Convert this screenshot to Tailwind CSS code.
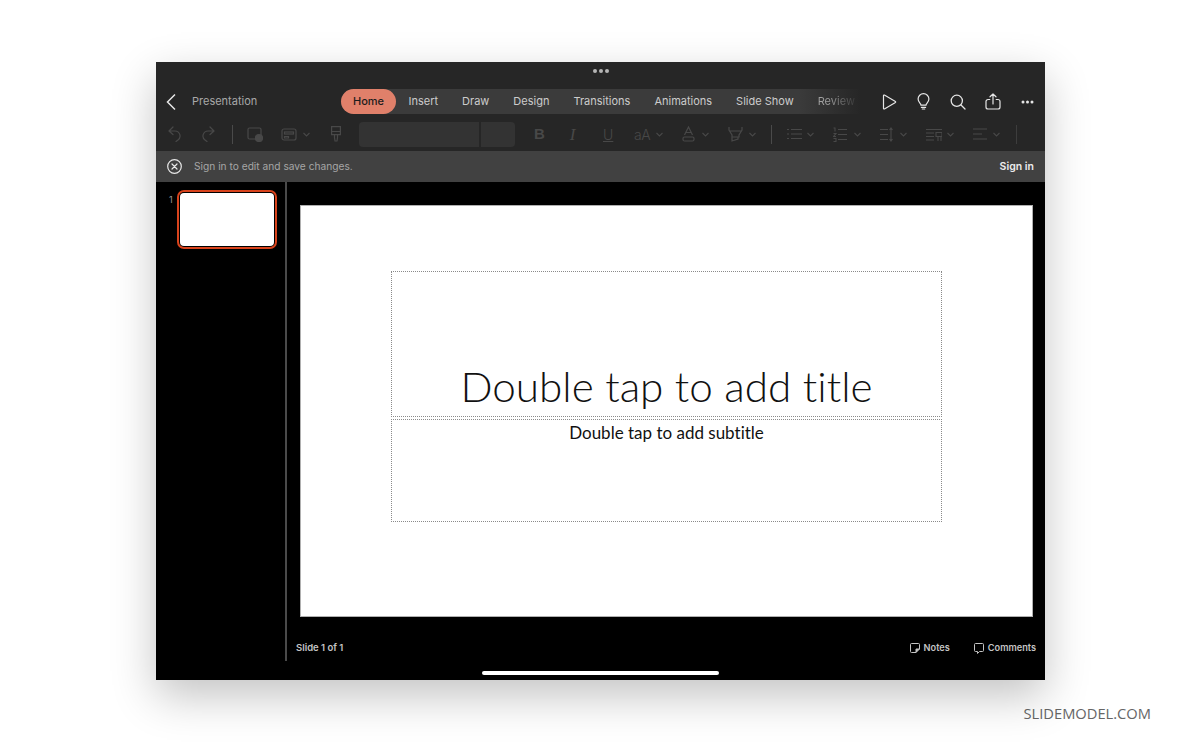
<!DOCTYPE html>
<html lang="en">
<head>
  <meta charset="UTF-8">
  <title>Presentation</title>
  <script src="https://cdn.jsdelivr.net/npm/@tailwindcss/browser@4"></script>
</head>
<body class="bg-white h-[743px] overflow-hidden font-['Inter',sans-serif]">
  <div class="pt-[62px] pl-[156px]">
    <div class="relative w-[889px] h-[618px] flex flex-col bg-black shadow-[0_16px_42px_rgba(0,0,0,0.24)]">

      <!-- top bar -->
      <div class="h-[52px] bg-[#262626] relative">
        <div class="flex justify-center gap-[2px] pt-[7px]">
          <span class="w-[4px] h-[4px] rounded-full bg-[#b5b5b5]"></span>
          <span class="w-[4px] h-[4px] rounded-full bg-[#b5b5b5]"></span>
          <span class="w-[4px] h-[4px] rounded-full bg-[#b5b5b5]"></span>
        </div>
        <div class="flex items-center mt-[16px] h-[25px]">
          <svg class="ml-[9px] w-[12px] h-[18px] text-[#e6e6e6]" viewBox="0 0 12 18" fill="none" stroke="currentColor" stroke-width="1.5"><path d="M10 1.5 2.5 9l7.5 7.5"/></svg>
          <span class="ml-[15px] w-[149px] text-[11px] text-[#a8a8a8]">Presentation</span>
          <div class="w-[520px] h-[25px] flex items-center rounded-l-full bg-gradient-to-r from-[#3b3b3b] from-88% to-[#262626] text-[11px] text-[#cccccc]">
            <span class="w-[55px] h-[25px] flex items-center justify-center rounded-full bg-[#e0806a] text-[#1c1c1c] font-medium">Home</span>
            <div class="flex items-center gap-[24px] ml-[12.5px]">
              <span>Insert</span>
              <span>Draw</span>
              <span>Design</span>
              <span>Transitions</span>
              <span>Animations</span>
              <span>Slide Show</span>
              <span class="text-transparent bg-clip-text bg-gradient-to-r from-[#a0a0a0] from-30% to-[#3a3a3a]">Review</span>
            </div>
          </div>
          <div class="flex items-center text-[#e6e6e6] ml-[21px] gap-[19px]">
            <svg class="w-[15px] h-[16px]" viewBox="0 0 15 16" fill="none" stroke="currentColor" stroke-width="1.2" stroke-linejoin="round"><path d="M1.5 1.6v12.8a.6.6 0 0 0 .9.5l11-6.4a.6.6 0 0 0 0-1L2.4 1.1a.6.6 0 0 0-.9.5z"/></svg>
            <svg class="w-[15px] h-[17px]" viewBox="0 0 15 17" fill="none" stroke="currentColor" stroke-width="1.2" stroke-linecap="round"><path d="M5 12.2c0-1.6-2.9-3-2.900-6.100a5.400 5.400 0 0 1 10.800 0c0 3.100-2.900 4.500-2.900 6.100z"/><path d="M5.400 14.400h4.200M6.300 16h2.400"/></svg>
            <svg class="w-[16px] h-[16px]" viewBox="0 0 16 16" fill="none" stroke="currentColor" stroke-width="1.3" stroke-linecap="round"><circle cx="6.800" cy="6.800" r="5.600"/><path d="m11 11 4 4"/></svg>
            <svg class="w-[16px] h-[17px]" viewBox="0 0 16 17" fill="none" stroke="currentColor" stroke-width="1.2" stroke-linecap="round" stroke-linejoin="round"><path d="M8 11V1.200M5 3.800 8 1l3 2.800"/><path d="M4.800 6.500H3a2 2 0 0 0-2 2V14a2 2 0 0 0 2 2h10a2 2 0 0 0 2-2V8.500a2 2 0 0 0-2-2h-1.800"/></svg>
            <svg class="ml-[1px] w-[13px] h-[4px]" viewBox="0 0 13 4" fill="currentColor"><circle cx="2" cy="2" r="1.500"/><circle cx="6.500" cy="2" r="1.500"/><circle cx="11" cy="2" r="1.500"/></svg>
          </div>
        </div>
      </div>

      <!-- toolbar, everything disabled -->
      <div class="h-[37px] pt-[3px] bg-[#262626] flex items-center text-[#484848] text-[15px]">
        <div class="w-[889px] flex items-center pl-[12px]">
          <svg class="w-[13px] h-[16px]" viewBox="0 0 13 16" fill="none" stroke="currentColor" stroke-width="1.200" stroke-linecap="round" stroke-linejoin="round"><path d="M5 1 1 5l4 3.500M1.500 5H7a5 5 0 0 1 3 9l-2 1.500"/></svg>
          <svg class="ml-[21px] w-[13px] h-[16px]" viewBox="0 0 13 16" fill="none" stroke="currentColor" stroke-width="1.200" stroke-linecap="round" stroke-linejoin="round"><path d="M8 1l4 4-4 3.500M11.500 5H6a5 5 0 0 0-3 9l2 1.500"/></svg>
          <span class="ml-[17px] w-[1px] h-[19px] bg-[#4a4a4a]"></span>
          <svg class="ml-[14px] w-[16px] h-[15px]" viewBox="0 0 16 15" fill="none" stroke="currentColor" stroke-width="1.200"><rect x="1" y="1" width="13" height="11" rx="1.500"/><circle cx="12" cy="11" r="3.500" fill="currentColor"/></svg>
          <svg class="ml-[18px] w-[16px] h-[13px]" viewBox="0 0 16 13" fill="none" stroke="currentColor" stroke-width="1.200"><rect x="1" y="1" width="14" height="11" rx="2"/><rect x="3.500" y="4" width="9" height="2"/><path d="M3.500 8.500h4v1.500h-4z"/></svg>
          <svg class="ml-[6px] w-[7px] h-[5px]" viewBox="0 0 7 5" fill="none" stroke="currentColor" stroke-width="1.100"><path d="m.5 1 3 3 3-3"/></svg>
          <svg class="ml-[21px] w-[10px] h-[16px]" viewBox="0 0 10 16" fill="none" stroke="currentColor" stroke-width="1.200"><path d="M.6.600h8.800v8H.6zM.6 5.500h8.800"/><path d="M3.500 8.600v3L4 15h2l.5-3.400v-3"/></svg>
          <div class="ml-[18px] flex gap-[2px]">
            <span class="w-[120px] h-[25px] rounded-l-[4px] bg-[#333333]"></span>
            <span class="w-[34px] h-[25px] rounded-r-[4px] bg-[#333333]"></span>
          </div>
          <span class="ml-[19px] w-[9px] font-bold font-['Liberation_Sans',sans-serif]">B</span>
          <span class="ml-[24px] w-[11px] text-center italic font-['Liberation_Serif',serif] text-[17px] leading-none">I</span>
          <span class="ml-[25px] w-[10px] text-center underline font-light text-[14px]">U</span>
          <span class="ml-[21px] w-[16px] font-light text-[14px] tracking-[-0.5px] whitespace-nowrap">aA</span>
          <svg class="ml-[6px] w-[7px] h-[5px]" viewBox="0 0 7 5" fill="none" stroke="currentColor" stroke-width="1.100"><path d="m.5 1 3 3 3-3"/></svg>
          <svg class="ml-[19px] w-[13px] h-[16px]" viewBox="0 0 13 16" fill="none" stroke="currentColor" stroke-width="1.200"><path d="M2.500 9 6.500 1l4 8M4 6.500h5"/><rect x="1" y="11" width="11" height="4" rx="1.500"/></svg>
          <svg class="ml-[7px] w-[7px] h-[5px]" viewBox="0 0 7 5" fill="none" stroke="currentColor" stroke-width="1.100"><path d="m.5 1 3 3 3-3"/></svg>
          <svg class="ml-[19px] w-[15px] h-[16px]" viewBox="0 0 15 16" fill="none" stroke="currentColor" stroke-width="1.200"><path d="M1 1v3l3 5v2h7V9l3-5V1M1 5h13M4 11v4l6-2v-2"/></svg>
          <svg class="ml-[6px] w-[7px] h-[5px]" viewBox="0 0 7 5" fill="none" stroke="currentColor" stroke-width="1.100"><path d="m.5 1 3 3 3-3"/></svg>
          <span class="ml-[15px] w-[1px] h-[19px] bg-[#4a4a4a]"></span>
          <svg class="ml-[15px] w-[15px] h-[12px]" viewBox="0 0 15 12" fill="none" stroke="currentColor" stroke-width="1.100"><path d="M0 1.500h2M4 1.500h11M0 6h2M4 6h11M0 10.500h2M4 10.500h11"/></svg>
          <svg class="ml-[5px] w-[7px] h-[5px]" viewBox="0 0 7 5" fill="none" stroke="currentColor" stroke-width="1.100"><path d="m.5 1 3 3 3-3"/></svg>
          <svg class="ml-[19px] w-[14px] h-[15px]" viewBox="0 0 14 15" fill="none" stroke="currentColor" stroke-width="1.100"><path d="M.5 1H2v3.500M.5 6.500H3L.5 9.500H3M.5 11.500H3v3H.5M5 2.500h9M5 7.500h9M5 12.500h9"/></svg>
          <svg class="ml-[7px] w-[7px] h-[5px]" viewBox="0 0 7 5" fill="none" stroke="currentColor" stroke-width="1.100"><path d="m.5 1 3 3 3-3"/></svg>
          <svg class="ml-[19px] w-[14px] h-[15px]" viewBox="0 0 14 15" fill="none" stroke="currentColor" stroke-width="1.100"><path d="M0 2.500h8M0 7.500h8M0 12.500h8M11 1v13M9.500 3 11 1l1.500 2M9.500 12l1.500 2 1.500-2"/></svg>
          <svg class="ml-[6px] w-[7px] h-[5px]" viewBox="0 0 7 5" fill="none" stroke="currentColor" stroke-width="1.100"><path d="m.5 1 3 3 3-3"/></svg>
          <svg class="ml-[19px] w-[16px] h-[13px]" viewBox="0 0 16 13" fill="none" stroke="currentColor" stroke-width="1.100"><path d="M0 1.500h16M0 5h8M0 8.500h8M0 12h8M10 4.500h6v4h-6zM12 8.500V13M15 8.500V13"/></svg>
          <svg class="ml-[5px] w-[7px] h-[5px]" viewBox="0 0 7 5" fill="none" stroke="currentColor" stroke-width="1.100"><path d="m.5 1 3 3 3-3"/></svg>
          <svg class="ml-[19px] w-[14px] h-[12px]" viewBox="0 0 14 12" fill="none" stroke="currentColor" stroke-width="1.100"><path d="M0 1h14M0 6h9M0 11h14"/></svg>
          <svg class="ml-[6px] w-[7px] h-[5px]" viewBox="0 0 7 5" fill="none" stroke="currentColor" stroke-width="1.100"><path d="m.5 1 3 3 3-3"/></svg>
          <span class="ml-[16px] w-[1px] h-[19px] bg-[#3d3d3d]"></span>
        </div>
      </div>

      <!-- sign in banner -->
      <div class="h-[31px] bg-[#414141] flex items-center px-[11px]">
        <svg class="w-[15px] h-[15px] text-[#e8e8e8]" viewBox="0 0 15 15" fill="none" stroke="currentColor" stroke-width="1.200" stroke-linecap="round"><circle cx="7.500" cy="7.500" r="6.800"/><path d="m5 5 5 5M10 5l-5 5"/></svg>
        <span class="ml-[12px] text-[10.2px] text-[#a6a6a6]">Sign in to edit and save changes.</span>
        <span class="ml-auto text-[10.5px] font-semibold text-[#ececec]">Sign in</span>
      </div>

      <!-- content -->
      <div class="flex flex-1">
        <div class="w-[129px] flex pl-[13px] pt-[8px]">
          <span class="w-[8px] pt-[3px] text-[9px] text-[#9a9a9a]">1</span>
          <div class="w-[100px] h-[59px] rounded-[7px] border-[2px] border-[#d9431c] bg-black p-[1px]">
            <div class="w-full h-full rounded-[4px] bg-white"></div>
          </div>
        </div>
        <div class="w-[2px] h-[479px] bg-[#4a4a4a]"></div>
        <div class="flex-1 flex flex-col pl-[13px] pt-[23px]">
          <div class="w-[733px] h-[412px] bg-white border border-[#b0b0b0] pl-[90px] pt-[65px]">
            <div class="w-[551px] h-[146px] border border-dotted border-[#8a8a8a] flex items-end justify-center">
              <span class="text-[42.25px] leading-[56px] mb-[2px] text-[#111111] font-light font-['Lato',sans-serif] [font-variant-ligatures:none]">Double tap to add title</span>
            </div>
            <div class="w-[551px] h-[103px] mt-[2px] border border-dotted border-[#8a8a8a] flex justify-center">
              <span class="text-[17px] leading-[26px] text-[#111111] font-['Lato',sans-serif] [font-variant-ligatures:none]">Double tap to add subtitle</span>
            </div>
          </div>
          <div class="flex items-center mt-[24px] pr-[9px] text-[9.2px] font-semibold text-[#c4c4c4]">
            <span class="-ml-[4px] text-[9.5px]">Slide 1 of 1</span>
            <svg class="ml-auto w-[10px] h-[10px]" viewBox="0 0 10 10" fill="none" stroke="currentColor" stroke-width="1"><path d="M1.500.500h7a1 1 0 0 1 1 1V6L6 9.500H1.500a1 1 0 0 1-1-1v-7a1 1 0 0 1 1-1z"/><path d="M6 9.500V6h3.500" fill="currentColor"/></svg>
            <span class="ml-[4px]">Notes</span>
            <svg class="ml-[24px] w-[10px] h-[11px]" viewBox="0 0 10 11" fill="none" stroke="currentColor" stroke-width="1" stroke-linejoin="round"><path d="M1.500.500h7a1 1 0 0 1 1 1v6a1 1 0 0 1-1 1H5.500L3.500 10.500V8.500h-2a1 1 0 0 1-1-1v-6a1 1 0 0 1 1-1z"/></svg>
            <span class="ml-[4px]">Comments</span>
          </div>
        </div>
      </div>

      <!-- home indicator sits over the black area -->
      <div class="absolute left-[326px] bottom-[5px] w-[237px] h-[4px] rounded-full bg-white"></div>
    </div>
    <div class="w-[995px] mt-[23px] text-right text-[14.7px] text-[#666666] font-['Open_Sans',sans-serif] leading-[20px]">SLIDEMODEL.COM</div>
  </div>
</body>
</html>
